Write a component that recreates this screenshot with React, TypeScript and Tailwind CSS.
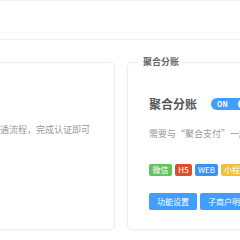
import React from "react";

export default function App() {
  const font = { fontFamily: '"Noto Sans CJK SC", "Noto Sans", sans-serif' };
  return (
    <div className="w-[240px] h-[240px] overflow-hidden bg-white relative" style={font}>
      <div className="h-[40px] border-t border-[#eef3f3] border-b border-b-[#f0f0f0] bg-white" />
      <div className="flex items-start gap-[12px] mt-[16px]">
        <div className="mt-[6px] ml-[-100px] w-[215px] h-[168px] shrink-0 border border-[#ebeef5] rounded-[5px] shadow-[0_1px_3px_rgba(0,0,0,0.04)]">
          <div className="pl-[36px] pt-[61px] text-[9px] leading-[12px] text-[#999] whitespace-nowrap">
            请先完成进件普通流程，完成认证即可
          </div>
        </div>
        <fieldset className="w-[230px] h-[174px] shrink-0 border border-[#ebeef5] rounded-[5px] shadow-[0_1px_3px_rgba(0,0,0,0.04)] pl-[21px]">
          <legend className="ml-[-10px] px-[4px] text-[9px] leading-[12px] font-bold text-[#666]">聚合分账</legend>
          <div className="flex items-center mt-[28px] h-[16px] whitespace-nowrap">
            <span className="text-[12px] font-bold text-[#555] leading-[16px]">聚合分账</span>
            <span className="ml-[14px] w-[38px] h-[12px] rounded-full bg-[#409eff] flex items-center justify-between pl-[6px] pr-[1px]">
              <span className="text-[7px] font-bold text-white leading-none">ON</span>
              <span className="w-[10px] h-[10px] rounded-full bg-white" />
            </span>
          </div>
          <div className="mt-[16px] text-[9px] leading-[12px] text-[#999] whitespace-nowrap">
            需要与“聚合支付”一起使用才能生效
          </div>
          <div className="flex gap-[3px] mt-[24px] whitespace-nowrap">
            <span className="h-[12px] w-[23px] rounded-[2px] bg-[#5fc45f] text-white text-[8px] leading-[12px] text-center">微信</span>
            <span className="h-[12px] w-[17px] rounded-[2px] bg-[#d9512c] text-white text-[8px] leading-[12px] text-center">H5</span>
            <span className="h-[12px] w-[23px] rounded-[2px] bg-[#3d8ff0] text-white text-[8px] leading-[12px] text-center">WEB</span>
            <span className="h-[12px] px-[3px] rounded-[2px] bg-[#eec03e] text-white text-[8px] leading-[12px] text-center">小程序</span>
          </div>
          <div className="flex gap-[3px] mt-[17px] whitespace-nowrap">
            <span className="h-[17px] w-[48px] rounded-[2px] bg-[#409eff] text-white text-[8px] leading-[17px] text-center">功能设置</span>
            <span className="h-[17px] w-[56px] rounded-[2px] bg-[#409eff] text-white text-[8px] leading-[17px] text-center">子商户明细</span>
          </div>
        </fieldset>
      </div>
    </div>
  );
}
